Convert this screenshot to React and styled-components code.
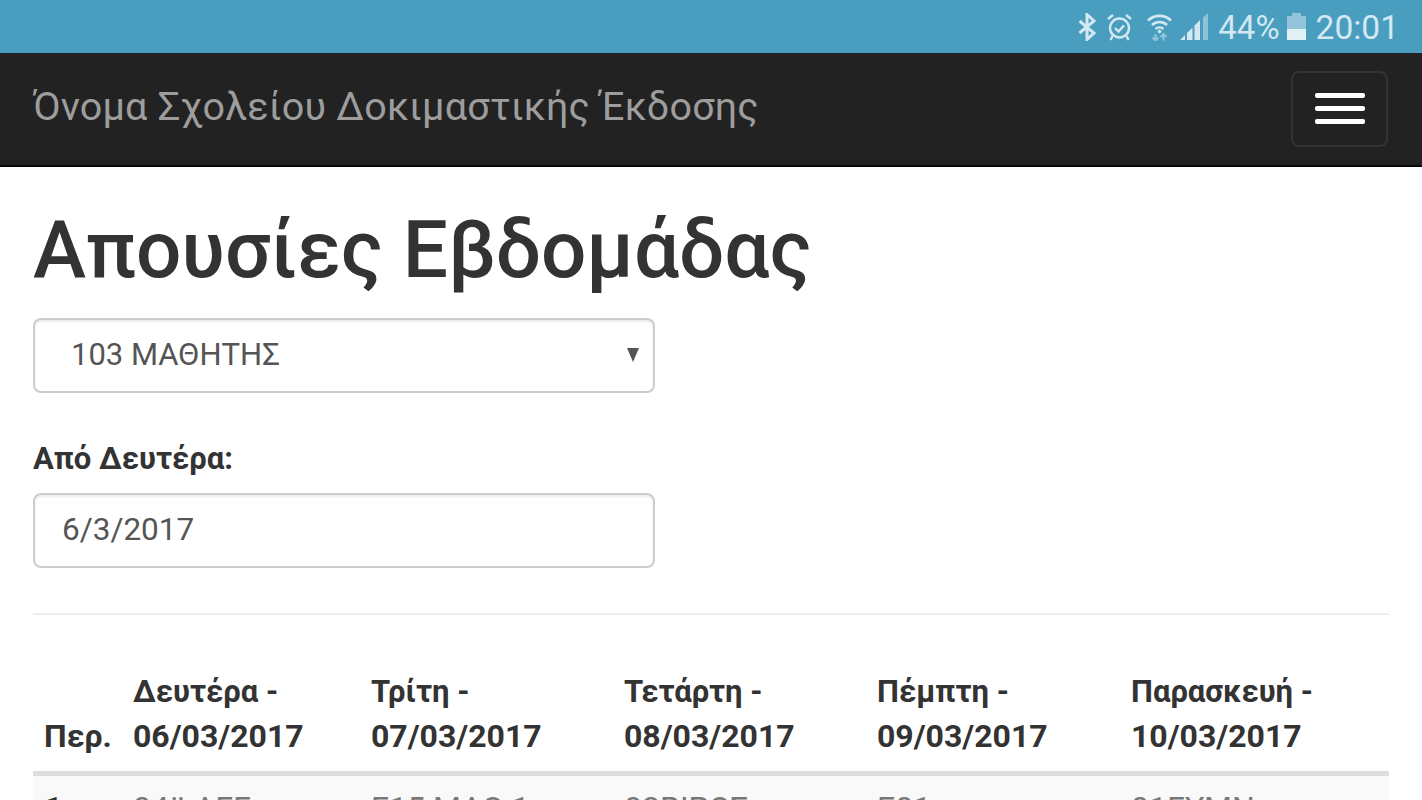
import React from 'react';
import styled, { createGlobalStyle } from 'styled-components';

const Global = createGlobalStyle`
  html, body { margin: 0; padding: 0; background: #fff; height: 800px; overflow: hidden; }
  body { font-family: Roboto, "Noto Sans", sans-serif; color: #333; }
  * { box-sizing: border-box; }
`;

const StatusBar = styled.div`
  height: 53px; background: #499dbf; display: flex; align-items: center; justify-content: flex-end;
  padding: 1px 23px 0 0; color: #d3e8f1;
`;
const StatusIcon = styled.svg`
  display: block; flex: none; margin-right: ${p => p.$mr || 0}px;
`;
const StatusText = styled.span`
  font-size: ${p => p.$size || 33}px; line-height: 53px; font-weight: 400; white-space: nowrap;
  margin-right: ${p => p.$mr || 0}px;
`;
const NavBar = styled.nav`
  height: 114px; background: #222; border-bottom: 2px solid #080808; display: flex; align-items: center;
  justify-content: space-between; padding: 0 34px 6px 33px;
`;
const Brand = styled.div`
  font-size: 39.5px; color: #9d9d9d; font-weight: 400; letter-spacing: 0.2px;
`;
const Toggle = styled.div`
  width: 97px; height: 76px; border: 2px solid #333; border-radius: 8px; display: flex; flex-direction: column;
  align-items: center; justify-content: center; gap: 8px; margin-top: 5px;
`;
const Bar = styled.span`
  width: 50px; height: 5px; background: #fff; border-radius: 2px; display: block;
`;
const Main = styled.main`
  padding: 0 33px;
`;
const Title = styled.h1`
  margin: 38px 0 22px; font-size: 80px; line-height: 91px; font-weight: 500; color: #333;
`;
const FieldBox = styled.div`
  width: 622px; height: 75px; border: 2px solid #ccc; border-radius: 8px; background: #fff;
  box-shadow: inset 0 2px 2px rgba(0,0,0,.075); display: flex; align-items: center; justify-content: space-between;
  padding: 0 ${p => p.$select ? 14 : 28}px 2px ${p => p.$select ? 36 : 27}px;
  font-size: ${p => p.$select ? 31 : 31.5}px; color: #555;
`;
const Arrow = styled.svg`
  display: block;
`;
const Label = styled.label`
  display: block; margin: 47px 0 15px; font-size: 31px; line-height: 38px; font-weight: 700; color: #333;
`;
const Divider = styled.hr`
  margin: 45px 0 0; border: 0; border-top: 2px solid #eee;
`;
const Table = styled.table`
  width: 1356px; border-collapse: collapse; table-layout: fixed; margin-top: 54px;
`;
const Th = styled.th`
  text-align: left; vertical-align: bottom; padding: 0 11px 13px; width: ${p => p.$w}px;
  font-size: 32px; line-height: 44px; font-weight: 700; color: #333; border-bottom: 5px solid #ddd;
`;
const DayName = styled.span`
  font-size: 31px;
`;
const Td = styled.td`
  padding: 10px 11px; font-size: 32px; line-height: 44px; color: ${p => p.$strong ? '#333' : '#777'};
  background: #f9f9f9; vertical-align: top; font-weight: ${p => p.$strong ? 700 : 400}; white-space: nowrap;
`;

const days = [
  ['Δευτέρα -', '06/03/2017', 238, '04ϋ ΑΓΓ'],
  ['Τρίτη -', '07/03/2017', 253, 'Ε15 ΜΑΘ 1'],
  ['Τετάρτη -', '08/03/2017', 253, '02ΒΙΡΟΣ'],
  ['Πέμπτη -', '09/03/2017', 254, 'Ε01'],
  ['Παρασκευή -', '10/03/2017', 269, '01ΓΥΜΝ'],
];

export default function App() {
  return (
    <>
      <Global />
      <StatusBar>
        <StatusIcon $mr={10} width="19" height="28" viewBox="0 0 19 28" fill="none" stroke="#d3e8f1" strokeWidth="3">
          <path d="M1.500 8 L16 20 L9 26.500 L9 1.500 L16 8 L1.500 20" />
        </StatusIcon>
        <StatusIcon $mr={15} width="25" height="28" viewBox="0 0 25 28" fill="none" stroke="#d3e8f1" strokeWidth="2.400">
          <circle cx="12.500" cy="15" r="9.500" />
          <path d="M8 15l3.500 3.500 5.500-6" />
          <path d="M1 6l5-4M24 6l-5-4M5.500 23l-2 4M19.500 23l2 4" />
        </StatusIcon>
        <StatusIcon $mr={8} width="25" height="28" viewBox="0 0 25 28" fill="none" stroke="#d3e8f1" strokeWidth="2.600">
          <path d="M1 7.500a16.500 16.500 0 0 1 23 0M5 12a11 11 0 0 1 15 0M8.500 16a6 6 0 0 1 8 0" />
          <circle cx="12.500" cy="18.500" r="1.800" fill="#d3e8f1" stroke="none" />
          <path d="M8.500 21v6.500M5.500 24.500l3 3 3-3M16.500 27.500v-6.500M13.500 24l3-3 3 3" stroke="#8fc2d8" strokeWidth="2.200" />
        </StatusIcon>
        <StatusIcon $mr={10} width="28" height="28" viewBox="0 0 28 28">
          <path d="M0 27h5v-5z" fill="#d3e8f1" />
          <path d="M7 27h5.500V14.500L7 20z" fill="#d3e8f1" />
          <path d="M14.500 27H20V7l-5.500 5.500z" fill="#d3e8f1" />
          <path d="M23 27h5V0l-5 4.500z" fill="#8fc2d8" />
        </StatusIcon>
        <StatusText $mr={7}>44%</StatusText>
        <StatusIcon $mr={10} width="19" height="28" viewBox="0 0 19 28">
          <path d="M5 0h9v3h5v13H0V3h5z" fill="#93c5da" />
          <rect x="0" y="16" width="19" height="11" fill="#e3f0f6" />
        </StatusIcon>
        <StatusText $size={33.5}>20:01</StatusText>
      </StatusBar>
      <NavBar>
        <Brand>Όνομα Σχολείου Δοκιμαστικής Έκδοσης</Brand>
        <Toggle><Bar /><Bar /><Bar /></Toggle>
      </NavBar>
      <Main>
        <Title>Απουσίες Εβδομάδας</Title>
        <FieldBox $select>
          <span>103 ΜΑΘΗΤΗΣ</span>
          <Arrow width="12" height="14" viewBox="0 0 12 14"><path d="M0 0h12L6 14z" fill="#555" /></Arrow>
        </FieldBox>
        <Label>Από Δευτέρα:</Label>
        <FieldBox>6/3/2017</FieldBox>
        <Divider />
        <Table>
          <thead>
            <tr>
              <Th $w={89}>Περ.</Th>
              {days.map(d => <Th key={d[1]} $w={d[2]}><DayName>{d[0]}</DayName><br />{d[1]}</Th>)}
            </tr>
          </thead>
          <tbody>
            <tr>
              <Td $strong>1</Td>
              {days.map(d => <Td key={d[1]}>{d[3]}</Td>)}
            </tr>
          </tbody>
        </Table>
      </Main>
    </>
  );
}
